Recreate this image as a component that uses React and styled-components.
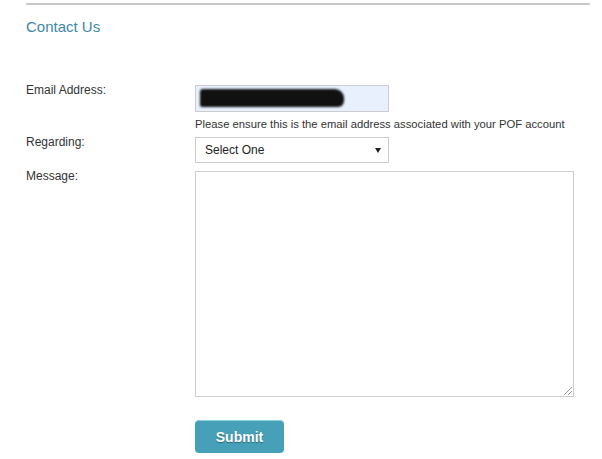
import React from 'react'
import styled, { createGlobalStyle } from 'styled-components'

const GlobalStyle = createGlobalStyle`
  body {
    margin: 0;
    background: #fff;
    font-family: "Liberation Sans", Arial, sans-serif;
    color: #333;
  }
`

const App = () => {
  return (
    <>
      <GlobalStyle />
      <Page>
        <Title>Contact Us</Title>
        <Form>
          <Row gap={6}>
            <Label>Email Address:</Label>
            <Field>
              <EmailBox>
                <Redacted />
              </EmailBox>
              <Hint>Please ensure this is the email address associated with your POF account</Hint>
            </Field>
          </Row>
          <Row gap={8}>
            <Label>Regarding:</Label>
            <Field>
              <SelectBox>
                <span>Select One</span>
                <Arrow />
              </SelectBox>
            </Field>
          </Row>
          <Row gap={23}>
            <Label>Message:</Label>
            <Field>
              <MessageBox />
            </Field>
          </Row>
          <Row gap={0}>
            <Label />
            <Field>
              <SubmitButton>Submit</SubmitButton>
            </Field>
          </Row>
        </Form>
      </Page>
    </>
  )
}

export default App

const Page = styled.div`
  margin: 3px 12px 0 26px;
  border-top: 2px solid #c8c8c8;
  padding-top: 12px;
`

const Title = styled.h1`
  margin: 0;
  font-weight: normal;
  font-size: 15px;
  line-height: 20px;
  color: #3d87a8;
`

const Form = styled.div`
  display: flex;
  flex-direction: column;
  margin-top: 48px;
`

const Row = styled.div`
  display: flex;
  align-items: flex-start;
  margin-bottom: ${p => p.gap}px;
`

const Label = styled.div`
  width: 169px;
  flex-shrink: 0;
  font-size: 12px;
  line-height: 10px;
  padding-top: 0;
  color: #333;
`

const Field = styled.div`
  display: flex;
  flex-direction: column;
`

const EmailBox = styled.div`
  box-sizing: border-box;
  width: 194px;
  height: 27px;
  border: 1px solid #ccc;
  background: #e8f0fe;
  padding: 3px 4px;
  overflow: hidden;
`

const Redacted = styled.div`
  width: 144px;
  height: 18px;
  background: #111;
  border-radius: 3px 9px 6px 2px;
  filter: blur(1.2px);
`

const Hint = styled.div`
  font-size: 11.25px;
  line-height: 13px;
  margin-top: 6px;
  color: #333;
  white-space: nowrap;
`

const SelectBox = styled.div`
  box-sizing: border-box;
  width: 194px;
  height: 26px;
  border: 1px solid #ccc;
  background: #fff;
  display: flex;
  align-items: center;
  justify-content: space-between;
  padding: 0 7px 0 9px;
  font-size: 12px;
  color: #222;
`

const Arrow = styled.span`
  width: 0;
  height: 0;
  border-left: 3px solid transparent;
  border-right: 3px solid transparent;
  border-top: 5px solid #222;
`

const MessageBox = styled.div`
  position: relative;
  box-sizing: border-box;
  width: 379px;
  height: 226px;
  border: 1px solid #ccc;
  background: #fff;
  &::after {
    content: '';
    position: absolute;
    right: 1px;
    bottom: 1px;
    width: 8px;
    height: 8px;
    background: linear-gradient(135deg, transparent 45%, #999 45%, #999 53%, transparent 53%, transparent 72%, #999 72%, #999 80%, transparent 80%);
  }
`

const SubmitButton = styled.button`
  box-sizing: border-box;
  width: 89px;
  height: 33px;
  border: none;
  border-top: 1px solid #8ccfe0;
  border-radius: 4px;
  background: #45a0b8;
  color: #fff;
  font-family: "Liberation Sans", Arial, sans-serif;
  font-weight: bold;
  font-size: 14px;
  text-shadow: 0 1px 1px rgba(0, 0, 0, 0.35);
  padding: 0;
  cursor: pointer;
`
